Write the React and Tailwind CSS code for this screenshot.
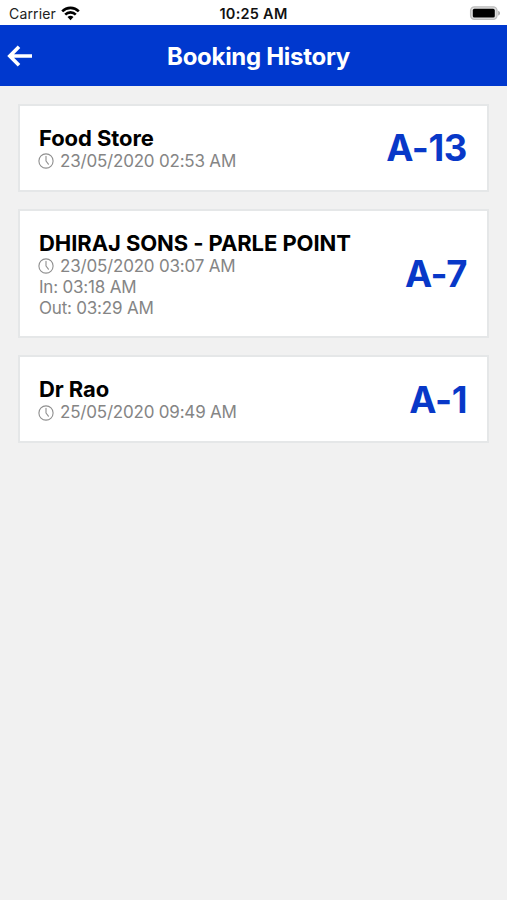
const bookings = [
    { id: 1, name: "Food Store", date: "23/05/2020 02:53 AM", token: "A-13" },
    { id: 2, name: "DHIRAJ SONS - PARLE POINT", date: "23/05/2020 03:07 AM", inTime: "03:18 AM", outTime: "03:29 AM", token: "A-7" },
    { id: 3, name: "Dr Rao", date: "25/05/2020 09:49 AM", token: "A-1" },
];

const WifiIcon = () => (
    <svg width="19" height="15" viewBox="0 0 19 15" fill="none" stroke="#000" strokeWidth="2.6">
        <path d="M1.2 5.3a11.8 11.8 0 0 1 16.6 0" />
        <path d="M4.2 8.6a7.5 7.5 0 0 1 10.6 0" />
        <path d="M9.5 14.2 6.5 11.1a4.3 4.3 0 0 1 6 0z" fill="#000" stroke="none" />
    </svg>
);

const BatteryIcon = () => (
    <svg width="32" height="16" viewBox="0 0 32 16">
        <rect x="1.6" y="0.8" width="26.4" height="12.6" rx="3.8" fill="#dedede" stroke="#bdbdbd" strokeWidth="1.3" />
        <rect x="3.8" y="2.8" width="22" height="8.8" rx="1.6" fill="#000" />
        <path d="M29.2 4.8c2.4.8 2.4 4 0 4.8z" fill="#a8a8a8" />
    </svg>
);

const ClockIcon = () => (
    <svg width="16" height="16" viewBox="0 0 16 16" fill="none" stroke="#8f8f8f" strokeWidth="1.1" strokeLinecap="round" strokeLinejoin="round">
        <circle cx="8" cy="8" r="7.1" />
        <path d="M8 3.3V8l2.4 3.2" />
    </svg>
);

function StatusBar () {
    return (
        <div className="h-[25.4px] bg-white grid grid-cols-3 items-center pl-[9px] pr-[6px] pt-[2px] text-[14px] text-[#222]">
            <div className="flex items-center gap-[5px] tracking-[0.15px]">
                Carrier <WifiIcon />
            </div>
            <div className="text-center font-semibold text-[#111] text-[14.5px] tracking-[0.25px] -ml-[3px]">10:25 AM</div>
            <div className="flex justify-end"><BatteryIcon /></div>
        </div>
    );
}

function Header () {
    return (
        <div className="h-[60.6px] bg-[#0038ce] grid grid-cols-[48px_1fr_48px] items-center text-white">
            <button className="pl-[7px]">
                <svg width="26" height="22" viewBox="0 0 26 22" fill="none" stroke="currentColor" strokeWidth="3.6">
                    <path d="M12 1.8 2.8 11l9.2 9.2M2.8 11H25" />
                </svg>
            </button>
            <h1 className="text-center text-[24px] font-bold tracking-[-0.3px] whitespace-nowrap pl-[10px] pt-[2px]">Booking History</h1>
        </div>
    );
}

function BookingCard ({ booking }) {
    return (
        <div className="bg-white border-2 border-[#e5e7e8] pl-[19px] pr-[20px] pt-[20px] pb-[17.6px] flex items-center justify-between">
            <div className="text-[17px] leading-[21px] tracking-[-0.2px] text-[#858585]">
                <h2 className="text-[22px] leading-[25px] font-bold tracking-[-0.08px] text-black whitespace-nowrap">{booking.name}</h2>
                <div className="flex items-center gap-[6px] -ml-px"><ClockIcon /> {booking.date}</div>
                {booking.inTime && <div>In: {booking.inTime}</div>}
                {booking.outTime && <div>Out: {booking.outTime}</div>}
            </div>
            <div className="text-[36.5px] leading-[44px] -mt-px font-bold tracking-[-0.4px] text-[#0838c8] whitespace-nowrap">{booking.token}</div>
        </div>
    );
}

export default function App () {
    return (
        <div className="min-h-screen bg-[#f1f1f1] font-['Inter',sans-serif]">
            <StatusBar />
            <Header />
            <div className="px-[18px] pt-[18px] space-y-[17px]">
                {bookings.map(booking => <BookingCard key={booking.id} booking={booking} />)}
            </div>
        </div>
    );
}
